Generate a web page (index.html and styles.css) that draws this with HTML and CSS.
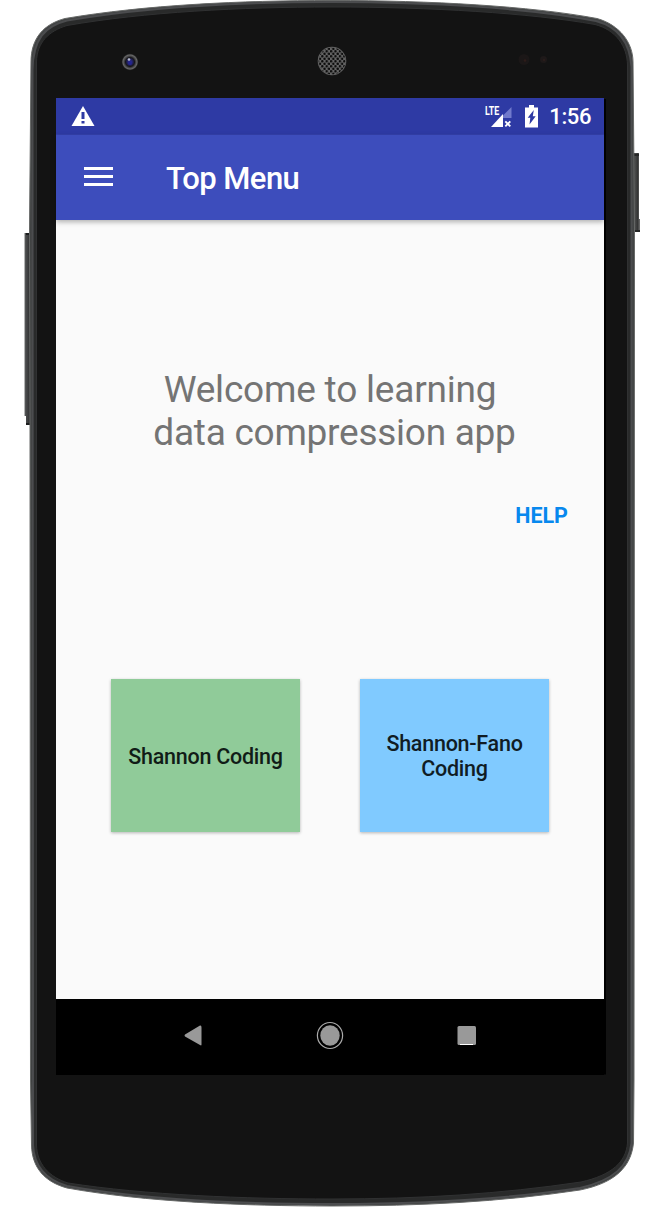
FILE: index.html
```
<!DOCTYPE html>
<html lang="en">
<head>
<meta charset="utf-8">
<title>Top Menu</title>
<link rel="stylesheet" href="styles.css">
</head>
<body>
<div class="device">
  <svg class="frame" viewBox="0 0 664 1216" aria-hidden="true">
    <defs>
      <linearGradient id="key" x1="0" x2="1" y1="0" y2="0">
        <stop offset="0" stop-color="#6c6e6e"/><stop offset=".2" stop-color="#4b4c4d"/><stop offset=".6" stop-color="#393a3b"/><stop offset="1" stop-color="#2b2c2d"/>
      </linearGradient>
      <linearGradient id="keyRight" x1="1" x2="0" y1="0" y2="0">
        <stop offset="0" stop-color="#707070"/><stop offset=".3" stop-color="#343535"/><stop offset=".6" stop-color="#494a4a"/><stop offset="1" stop-color="#202020"/>
      </linearGradient>
      <pattern id="mesh" width="4.4" height="5" patternUnits="userSpaceOnUse">
        <circle cx="1.1" cy="1.25" r="1.25" fill="#0c0c0c"/><circle cx="3.3" cy="3.75" r="1.25" fill="#0c0c0c"/>
      </pattern>
      <radialGradient id="lens">
        <stop offset="0" stop-color="#3434a8"/><stop offset=".35" stop-color="#20205c"/><stop offset=".55" stop-color="#17171b"/><stop offset=".72" stop-color="#49494b"/><stop offset=".85" stop-color="#666"/><stop offset="1" stop-color="#222"/>
      </radialGradient>
    </defs>
    <path d="M24.5 233H31V425H26V416H24.5Z" fill="url(#key)"/>
    <path d="M26 234H31M26 424H31" stroke="#1c1d1e" stroke-width="2"/>
    <path d="M632 153H639V219H640V232H632Z" fill="url(#keyRight)"/>
    <path d="M633 155H639M633 231H640" stroke="#252626" stroke-width="2"/>
    <path class="shell" d="M31 62C31 38 44 24 65 18.500C145 5 240 0.500 332 0.500C430 0.500 530 6 597 18.500C620 25 633 43 633 62L634.500 230L634 1080L633.500 1143C631 1167 615 1183 580 1190C500 1202 420 1206 332 1206C245 1206 145 1202 67 1188C45 1182 32 1168 31.500 1145L30.500 1080L30 430L29.500 230Z"/>
    <path class="rim" d="M32.500 70C33 39 45 26 67 20.500C145 7 240 2 332 2C430 2 530 8 596 21C619 27 630 44 631.500 67V1143C629 1166 614 1180 580 1188C500 1200 420 1204 332 1204C245 1204 145 1200 67 1186C47 1180 34 1167 33 1145Z"/>
    <path class="face" d="M36.500 62C37 42 49 31 67 25.500C145 12 240 7 332 7C430 7 530 13 595 24.500C616 30 627 46 627.500 65V1143C626 1162 612 1175 581 1182C500 1194 420 1199 332 1199C245 1199 145 1195 68 1183C49 1177 37 1164 36.500 1145Z"/>
    <circle cx="130" cy="62" r="8.200" fill="url(#lens)"/>
    <circle cx="129" cy="59.500" r="1.300" fill="#b8bdd0"/><circle cx="130" cy="63" r="2" fill="#24248e"/>
    <circle cx="332" cy="61" r="14.300" fill="#646464"/><circle cx="332" cy="61" r="13.500" fill="url(#mesh)"/>
    <circle cx="524" cy="59.500" r="5.500" fill="#1b1717"/><circle cx="525" cy="60.500" r="1.300" fill="#2d1c19"/>
    <circle cx="543.500" cy="59.500" r="3.500" fill="#1e1919"/><circle cx="544" cy="60" r="1.200" fill="#2b1d1b"/>
    <path d="M604 99H606V1074.500H57V1072H604Z" fill="#000"/>
  </svg>
  <main class="screen">
    <div class="status">
      <svg class="warning" width="24" height="22" viewBox="0 0 24 22"><path d="M12 0L23.500 20H0.500Z" fill="#fff"/><path d="M10.500 6H13.500V13H10.500ZM10.500 15H13.500V17.500H10.500Z" fill="#2e3aa4"/></svg>
      <div class="indicators">
        <span class="lte">LTE</span>
        <svg class="signal" width="21" height="22" viewBox="0 0 21 22"><path d="M20.500 1V12H11.500V10Z" fill="#717acc"/><path d="M0 21L12 8V21Z" fill="#fff"/><path d="M14.300 15.300L19.300 20.300M19.300 15.300L14.300 20.300" stroke="#fff" stroke-width="1.900"/></svg>
        <svg class="battery" width="13" height="23" viewBox="0 0 13 23"><path d="M4 0H9V2.500H13V22.500H0V2.500H4Z" fill="#fff"/><path d="M8.800 5L2.700 12.700H5.300L4.500 19.500L10.700 11.300H7.800Z" fill="#2e3aa4"/></svg>
        <span class="clock">1:56</span>
      </div>
    </div>
    <header class="toolbar">
      <svg width="29" height="19" viewBox="0 0 29 19"><path d="M0 0H29V3H0ZM0 8H29V11H0ZM0 16H29V19H0Z" fill="#fff"/></svg>
      <h1 class="title">Top Menu</h1>
    </header>
    <section class="content">
      <p class="welcome"><span class="line first">Welcome to learning&nbsp;</span><span class="line">data compression app</span></p>
      <button class="help">HELP</button>
      <div class="options">
        <button class="option green">Shannon Coding</button>
        <button class="option blue">Shannon-Fano<br>Coding</button>
      </div>
    </section>
    <nav class="navigation">
      <svg width="550" height="76" viewBox="0 0 550 76">
        <path d="M145.500 28.500V45.500Q145.500 47 144 46L129 37.500Q128 36.500 129 35.500L144 26.500Q145.500 26 145.500 28.500Z" fill="#999"/>
        <ellipse cx="274" cy="36.500" rx="12.600" ry="13" fill="none" stroke="#aaa" stroke-width="1.200"/><ellipse cx="274" cy="36.500" rx="9.700" ry="10.300" fill="#999"/>
        <rect x="401.500" y="27" width="18.500" height="19" rx="1.500" fill="#999"/><path d="M404 45.500H417" stroke="#fff"/>
      </svg>
    </nav>
  </main>
</div>
</body>
</html>
```
FILE: styles.css
```
* { box-sizing: border-box; }
body { margin: 0; background: #fff; font-family: Roboto, sans-serif; }
.device { position: relative; width: 664px; height: 1216px; padding: 98px 60px 0 56px; }
.frame { position: absolute; inset: 0; width: 664px; height: 1216px; }
.shell { fill: #414343; stroke: #666867; stroke-width: 1; }
.rim { fill: #292a2a; stroke: #4b4c4e; stroke-width: 2; }
.face { fill: #131313; stroke: #303132; stroke-width: 1; }
.screen { position: relative; width: 548px; height: 976px; display: flex; flex-direction: column; }
.status { height: 37px; flex: none; background: #2e3aa4; color: #fff; display: flex; justify-content: space-between; border-bottom: 1px solid #3441ac; padding: 8px 13px 0 15px; }
.indicators { display: flex; align-items: flex-start; }
.lte { font-size: 13px; line-height: 12px; font-weight: 700; width: 6px; transform: scaleX(.68); transform-origin: left; margin-top: -1px; }
.battery { margin: -1px 11px 0 13px; }
.clock { font-size: 22px; line-height: 22px; font-weight: 500; letter-spacing: -.4px; }
.toolbar { position: relative; z-index: 1; height: 85px; flex: none; background: #3d4dbc; color: #fff; display: flex; align-items: center; gap: 53px; padding: 0 28px 3px; box-shadow: 0 2px 5px rgba(0,0,0,.3); }
.title { margin: 4px 0 0; font-size: 31px; line-height: 35px; font-weight: 500; letter-spacing: -.55px; }
.content { height: 779px; flex: none; background: #fafafa; display: flex; flex-direction: column; padding: 148px 0 0; overflow: hidden; }
.welcome { margin: 0; font-size: 37px; line-height: 43px; text-align: center; color: #747474; padding-left: 9px; }
.line { display: block; letter-spacing: -.26px; }
.first { letter-spacing: -.2px; }
button { border: 0; padding: 0; font-family: inherit; }
.help { align-self: flex-end; width: 53px; margin: 49px 36px 0 0; background: transparent; color: #0788ee; font-size: 21.5px; line-height: 25px; font-weight: 700; letter-spacing: -.1px; white-space: nowrap; }
.options { display: flex; gap: 60px; margin: 151px 0 0 55px; }
.option { width: 189px; height: 153px; padding-top: 1px; color: #111c17; font-size: 21.5px; line-height: 25px; font-weight: 500; letter-spacing: -.25px; box-shadow: 0 1px 3px rgba(0,0,0,.28); }
.green { background: #90cb99; padding-top: 2px; }
.blue { background: #80caff; color: #101c24; }
.navigation { height: 76px; flex: none; background: #000; }
.navigation svg { display: block; }
```
